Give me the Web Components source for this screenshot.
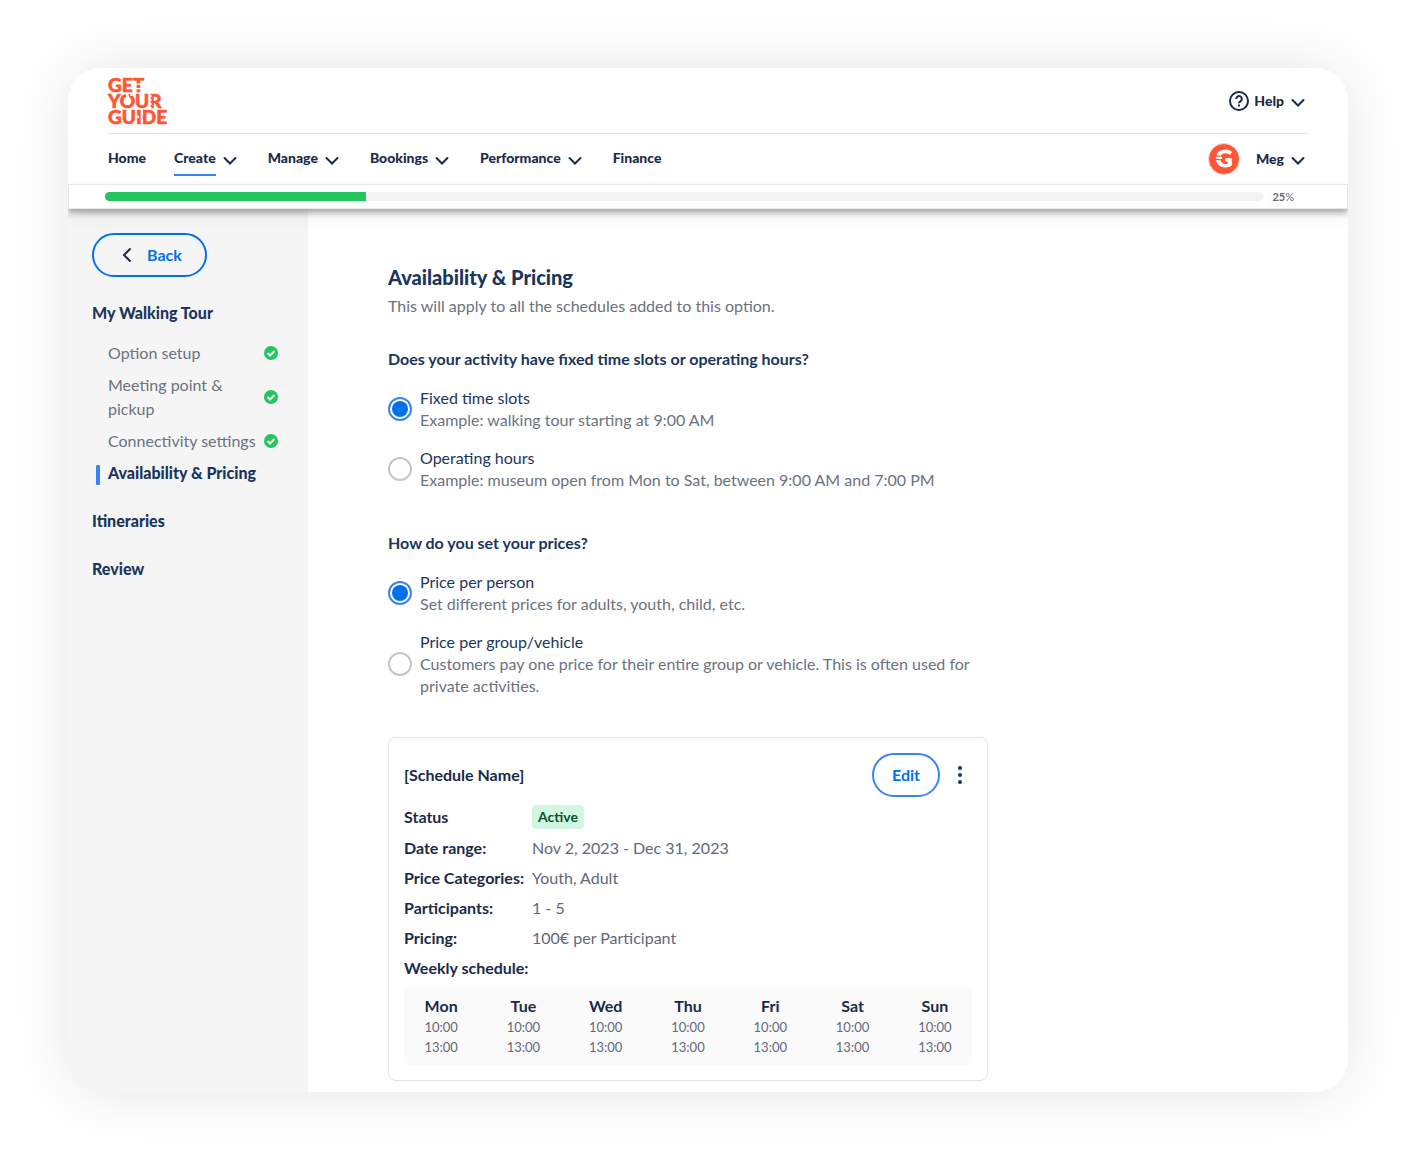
<!DOCTYPE html>
<html lang="en">
<head>
<meta charset="utf-8">
<title>Availability &amp; Pricing</title>
<style>
  body {
    margin: 0;
    padding: 68px;
    background: #fff;
    color: #1a2b49;
    font: 16px/22px Lato, "Open Sans", sans-serif;
    --navy: #1a2b49;
    --heading: #1a365d;
    --muted: #6b7280;
    --blue: #0071eb;
    --ring: #3b82f6;
    --green: #22c55e;
    --orange: #ff5533;
  }
</style>
</head>
<body>

<app-window>
  <app-header slot="header">
    <nav-item>Home</nav-item>
    <nav-item menu active>Create</nav-item>
    <nav-item menu>Manage</nav-item>
    <nav-item menu>Bookings</nav-item>
    <nav-item menu>Performance</nav-item>
    <nav-item>Finance</nav-item>
  </app-header>
  <progress-strip slot="header" value="25"></progress-strip>

  <side-bar slot="side">
    <side-section heading="My Walking Tour">
      <side-step done>Option setup</side-step>
      <side-step done>Meeting point &amp; pickup</side-step>
      <side-step done>Connectivity settings</side-step>
      <side-step current>Availability &amp; Pricing</side-step>
    </side-section>
    <side-section heading="Itineraries"></side-section>
    <side-section heading="Review"></side-section>
  </side-bar>

  <page-title heading="Availability &amp; Pricing">This will apply to all the schedules added to this option.</page-title>
  <radio-group name="slots"></radio-group>
  <radio-group name="prices"></radio-group>
  <schedule-card></schedule-card>
</app-window>

<script>
const chevron = `<svg width="20" height="20" viewBox="0 0 20 20" aria-hidden="true"><path d="M4.5 8l5.500 5.500L15.500 8" fill="none" stroke="currentColor" stroke-width="2" stroke-linecap="round"/></svg>`;

function attach(el, html) {
  const template = document.createElement('template');
  template.innerHTML = html;
  const root = el.attachShadow({ mode: 'open' });
  root.appendChild(template.content.cloneNode(true));
  return root;
}

class AppWindow extends HTMLElement {
  constructor() {
    super();
    attach(this, `
      <style>
        :host {
          display: block;
          overflow: hidden;
          border-radius: 32px;
          background: #fff;
          box-shadow: 0 0 64px rgba(0, 0, 0, 0.1);
        }
        header { position: relative; z-index: 1; }
        .columns { display: flex; }
        main {
          flex: 1;
          min-width: 0;
          padding: 54px 80px 11px;
        }
        .inner { max-width: 600px; }
      </style>
      <header><slot name="header"></slot></header>
      <div class="columns">
        <slot name="side"></slot>
        <main><div class="inner"><slot></slot></div></main>
      </div>
    `);
  }
}

class BrandLogo extends HTMLElement {
  constructor() {
    super();
    attach(this, `
      <style>
        :host { display: block; color: var(--orange); }
        svg { display: block; overflow: visible; }
        text { font: 900 19px Lato, sans-serif; fill: currentColor; stroke: currentColor; stroke-width: 0.6; }
      </style>
      <svg width="62" height="48" viewBox="0 0 62 48" role="img" aria-label="GetYourGuide">
        <text><tspan x="0" y="15">GET</tspan><tspan x="0" y="31">YOUR</tspan><tspan x="0" y="47">GUIDE</tspan></text>
        <g fill="#fff">
          <path d="M28 6.500h9v1.200h-9zM28 11h9v1.200h-9z"/>
          <path d="M17 16l2 5 2-1-1-4zM23 16l-1 3h2l1-3z"/>
          <path d="M42 17l2 2-2 2 2 2-2 2 2 2-2 2 2 2h-3V17z"/>
          <path d="M35 34.500l-2 2 2 2zM35 41.500l-2 2 2 2zM29.500 38l2 2-2 2z"/>
        </g>
      </svg>
    `);
  }
}

class MenuLabel extends HTMLElement {
  constructor() {
    super();
    attach(this, `
      <style>
        :host { display: block; }
        button {
          display: flex;
          align-items: center;
          gap: 4px;
          padding: 0;
          border: 0;
          background: none;
          color: var(--navy);
          font: 900 14px/20px Lato, sans-serif;
          cursor: pointer;
        }
        svg { display: block; margin-top: 2px; }
      </style>
      <button type="button"><slot></slot>${chevron}</button>
    `);
  }
}

class NavItem extends HTMLElement {
  constructor() {
    super();
    const menu = this.hasAttribute('menu');
    attach(this, `
      <style>
        :host { display: block; }
        a {
          display: flex;
          align-items: center;
          gap: 4px;
          color: var(--navy);
          font: 900 14px/20px Lato, sans-serif;
          text-decoration: none;
        }
        span { padding: 4px 0 6px; border-bottom: 2px solid transparent; border-top: 2px solid transparent; }
        :host([active]) span { border-bottom-color: var(--ring); }
        svg { display: block; margin-top: 2px; }
      </style>
      <a href="#"><span><slot></slot></span>${menu ? chevron : ''}</a>
    `);
  }
}

class AppHeader extends HTMLElement {
  constructor() {
    super();
    attach(this, `
      <style>
        :host { display: block; padding: 0 40px; background: #fff; }
        .top, .bar { display: flex; align-items: center; justify-content: space-between; }
        .top { height: 65px; border-bottom: 1px solid #dcdfe4; }
        .bar { height: 50px; }
        nav { display: flex; gap: 28px; }
        .help, .user { display: flex; align-items: center; }
        .help { gap: 5px; }
        .user { gap: 16px; }
        svg { display: block; }
        text { font: 700 23px Lato, sans-serif; fill: #fff; stroke: #fff; }
      </style>
      <div class="top">
        <brand-logo></brand-logo>
        <div class="help">
          <svg width="20" height="20" viewBox="0 0 20 20" fill="none" stroke="#1a2b49" stroke-width="2" aria-hidden="true">
            <circle cx="10" cy="10" r="9"/>
            <path d="M7.200 8a2.800 2.800 0 1 1 4.300 2.300c-.9.600-1.500 1-1.500 2"/>
            <path d="M10 13.500v2"/>
          </svg>
          <menu-label>Help</menu-label>
        </div>
      </div>
      <div class="bar">
        <nav><slot></slot></nav>
        <div class="user">
          <svg width="32" height="32" viewBox="0 0 32 32" role="img" aria-label="Account">
            <circle cx="16" cy="16" r="15.500" fill="#ff5533" stroke="#ddd"/>
            <text x="16" y="24" text-anchor="middle">G</text>
            <path d="M7 12.500h5.500v1.200H7zM7 16h5.500v1.200H7z" fill="#ff5533"/>
            <path d="M12 14h2v2h-2z" fill="#fff"/>
          </svg>
          <menu-label>Meg</menu-label>
        </div>
      </div>
    `);
  }
}

class ProgressStrip extends HTMLElement {
  constructor() {
    super();
    const value = this.getAttribute('value');
    attach(this, `
      <style>
        :host {
          display: flex;
          align-items: center;
          gap: 9px;
          height: 23px;
          padding: 0 53px 0 36px;
          border: 1px solid #e5e7eb;
          background: #fff;
          box-shadow: 0 4px 6px rgba(0, 0, 0, 0.3), 0 8px 16px rgba(0, 0, 0, 0.06);
        }
        .track { flex: 1; height: 9px; border-radius: 5px; overflow: hidden; background: #f3f3f3; }
        .fill { width: 22.5%; height: 100%; background: var(--green); }
        .label { color: #63687a; font-size: 11px; line-height: 16px; }
      </style>
      <div class="track" role="progressbar" aria-label="Setup progress" aria-valuenow="${value}"><div class="fill"></div></div>
      <div class="label"><b>${value}</b>%</div>
    `);
  }
}

class SideBar extends HTMLElement {
  constructor() {
    super();
    attach(this, `
      <style>
        :host {
          display: block;
          box-sizing: border-box;
          flex: none;
          width: 240px;
          padding: 24px;
          background: #f5f5f5;
        }
        button {
          display: flex;
          align-items: center;
          gap: 10px;
          height: 44px;
          margin-bottom: 24px;
          padding: 0 23px;
          border: 2px solid var(--blue);
          border-radius: 22px;
          background: none;
          color: var(--blue);
          font: 700 16px/22px Lato, sans-serif;
        }
        nav { display: flex; flex-direction: column; gap: 24px; }
      </style>
      <button type="button">
        <svg width="20" height="20" viewBox="0 0 20 20" aria-hidden="true"><path d="M13 4l-6 6 6 6" fill="none" stroke="#1a2b49" stroke-width="2" stroke-linecap="round"/></svg>
        Back
      </button>
      <nav><slot></slot></nav>
    `);
  }
}

class SideSection extends HTMLElement {
  constructor() {
    super();
    const steps = this.children.length > 0;
    attach(this, `
      <style>
        :host { display: block; }
        a { display: block; color: var(--heading); font-weight: 900; line-height: 24px; text-decoration: none; }
        .steps { display: flex; flex-direction: column; gap: 8px; padding-top: 16px; }
      </style>
      <a href="#">${this.getAttribute('heading')}</a>
      ${steps ? '<div class="steps"><slot></slot></div>' : ''}
    `);
  }
}

class SideStep extends HTMLElement {
  constructor() {
    super();
    const done = this.hasAttribute('done');
    attach(this, `
      <style>
        :host { display: flex; align-items: center; gap: 8px; padding: 0 6px 0 16px; }
        a { flex: 1; color: var(--muted); line-height: 24px; text-decoration: none; }
        svg { flex: none; }
        :host([current]) { padding-left: 4px; }
        :host([current]) a { color: var(--heading); font-weight: 900; }
        :host([current])::before {
          content: "";
          width: 4px;
          height: 20px;
          margin-top: 4px;
          border-radius: 1px;
          background: var(--ring);
        }
      </style>
      <a href="#"><slot></slot></a>
      ${done ? `<svg width="14" height="14" viewBox="0 0 14 14" role="img" aria-label="Done">
        <circle cx="7" cy="7" r="7" fill="#22c55e"/>
        <path d="M3.500 7l2.500 2.500 4.500-4.500" fill="none" stroke="#fff" stroke-width="2"/>
      </svg>` : ''}
    `);
  }
}

class PageTitle extends HTMLElement {
  constructor() {
    super();
    attach(this, `
      <style>
        :host { display: block; margin-bottom: 30px; }
        h1 { margin: 0 0 4px; color: var(--heading); font-size: 20px; line-height: 28px; font-weight: 900; }
        p { margin: 0; color: var(--muted); }
      </style>
      <h1>${this.getAttribute('heading')}</h1>
      <p><slot></slot></p>
    `);
  }
}

const questions = {
  slots: {
    title: 'Does your activity have fixed time slots or operating hours?',
    options: [
      ['Fixed time slots', 'Example: walking tour starting at 9:00 AM'],
      ['Operating hours', 'Example: museum open from Mon to Sat, between 9:00 AM and 7:00 PM'],
    ],
  },
  prices: {
    title: 'How do you set your prices?',
    options: [
      ['Price per person', 'Set different prices for adults, youth, child, etc.'],
      ['Price per group/vehicle', 'Customers pay one price for their entire group or vehicle. This is often used for private activities.'],
    ],
  },
};

class RadioGroup extends HTMLElement {
  constructor() {
    super();
    const name = this.getAttribute('name');
    const { title, options } = questions[name];
    attach(this, `
      <style>
        :host { display: block; margin-bottom: 40px; }
        fieldset { margin: 0; padding: 0; border: 0; min-width: 0; }
        legend { padding: 0; color: var(--heading); font-weight: 700; line-height: 24px; }
        label { display: flex; align-items: center; gap: 8px; margin-top: 16px; color: var(--muted); }
        strong { display: block; color: var(--heading); font-weight: 400; }
        input {
          appearance: none;
          box-sizing: border-box;
          flex: none;
          width: 24px;
          height: 24px;
          margin: 0;
          border: 2px solid #c0c7cf;
          border-radius: 50%;
          background: #fff;
        }
        input:checked {
          padding: 2px;
          border-color: var(--ring);
          background: var(--blue) content-box;
        }
      </style>
      <fieldset>
        <legend>${title}</legend>
        ${options.map(([label, hint], i) => `
          <label>
            <input type="radio" name="${name}" ${i === 0 ? 'checked' : ''}>
            <span><strong>${label}</strong>${hint}</span>
          </label>
        `).join('')}
      </fieldset>
    `);
  }
}

const details = [
  ['Date range:', 'Nov 2, 2023 - Dec 31, 2023'],
  ['Price Categories:', 'Youth, Adult'],
  ['Participants:', '1 - 5'],
  ['Pricing:', '100€ per Participant'],
];
const days = ['Mon', 'Tue', 'Wed', 'Thu', 'Fri', 'Sat', 'Sun'];
const times = ['10:00', '13:00'];

class ScheduleCard extends HTMLElement {
  constructor() {
    super();
    attach(this, `
      <style>
        :host {
          display: block;
          padding: 15px;
          border: 1px solid #dfe5ec;
          border-radius: 8px;
          color: var(--navy);
        }
        .head { display: flex; align-items: center; gap: 8px; margin-bottom: 8px; }
        h2 { flex: 1; margin: 0; font-size: 16px; font-weight: 700; }
        .edit {
          height: 44px;
          padding: 0 18px;
          border: 2px solid var(--ring);
          border-radius: 22px;
          background: none;
          color: var(--blue);
          font: 700 16px/22px Lato, sans-serif;
        }
        .more { padding: 0; border: 0; background: none; color: var(--heading); }
        svg { display: block; }
        dl { display: grid; grid-template-columns: 128px 1fr; gap: 8px 0; align-items: center; margin: 0; }
        dt { font-weight: 700; white-space: nowrap; }
        dd { margin: 0; color: #63687a; }
        .badge {
          display: block;
          width: fit-content;
          padding: 0 6px;
          border-radius: 4px;
          background: #d1f7e0;
          color: #0e4f2b;
          font-size: 14px;
          line-height: 24px;
          font-weight: 700;
        }
        .week { margin-top: 8px; padding: 8px 0; border-radius: 4px; background: #fafafa; overflow: hidden; }
        table {
          width: calc(100% + 16px);
          margin: 0 -8px;
          table-layout: fixed;
          border-collapse: separate;
          border-spacing: 8px 0;
          text-align: center;
        }
        th { padding: 0; font-weight: 700; }
        td { padding: 0; color: #63687a; font-size: 13px; line-height: 20px; }
      </style>
      <div class="head">
        <h2>[Schedule Name]</h2>
        <button class="edit" type="button">Edit</button>
        <button class="more" type="button" aria-label="More options">
          <svg width="24" height="24" viewBox="0 0 24 24" fill="currentColor">
            <circle cx="12" cy="5" r="2"/><circle cx="12" cy="12" r="2"/><circle cx="12" cy="19" r="2"/>
          </svg>
        </button>
      </div>
      <dl>
        <dt>Status</dt><dd><span class="badge">Active</span></dd>
        ${details.map(([term, text]) => `<dt>${term}</dt><dd>${text}</dd>`).join('')}
        <dt id="weekly">Weekly schedule:</dt><dd></dd>
      </dl>
      <div class="week">
        <table aria-labelledby="weekly">
          <thead><tr>${days.map((day) => `<th scope="col">${day}</th>`).join('')}</tr></thead>
          <tbody>${times.map((time) => `<tr>${days.map(() => `<td>${time}</td>`).join('')}</tr>`).join('')}</tbody>
        </table>
      </div>
    `);
  }
}

customElements.define('app-window', AppWindow);
customElements.define('brand-logo', BrandLogo);
customElements.define('menu-label', MenuLabel);
customElements.define('nav-item', NavItem);
customElements.define('app-header', AppHeader);
customElements.define('progress-strip', ProgressStrip);
customElements.define('side-bar', SideBar);
customElements.define('side-section', SideSection);
customElements.define('side-step', SideStep);
customElements.define('page-title', PageTitle);
customElements.define('radio-group', RadioGroup);
customElements.define('schedule-card', ScheduleCard);
</script>
</body>
</html>
